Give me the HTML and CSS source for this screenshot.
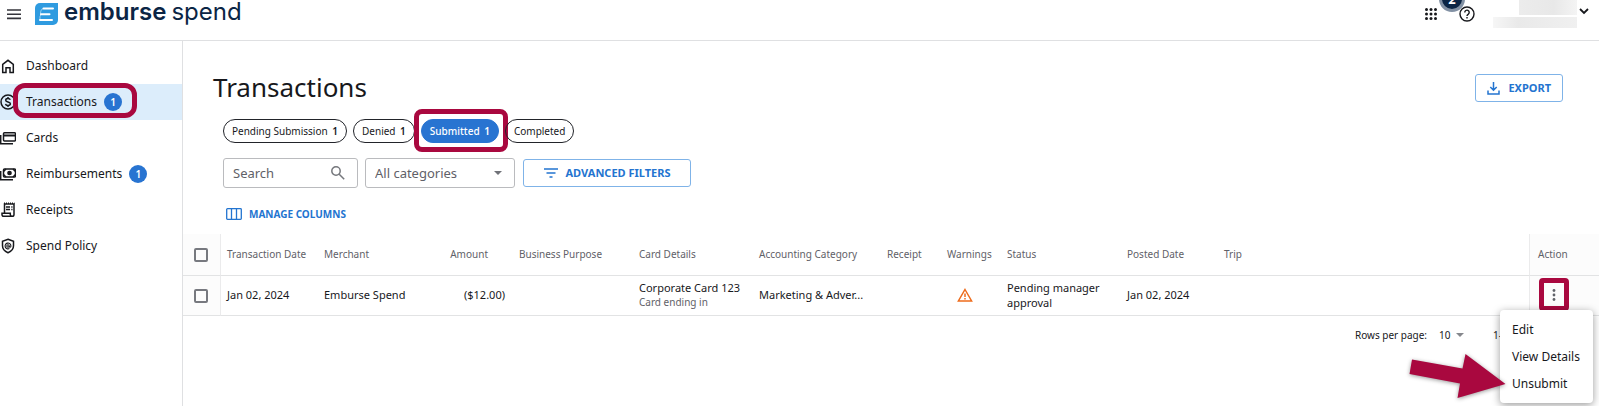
FILE: index.html
```html
<!DOCTYPE html>
<html lang="en">
<head>
<meta charset="utf-8">
<title>Transactions - Emburse Spend</title>
<link rel="stylesheet" href="styles.css">
</head>
<body>
<header class="topbar">
  <button class="icon-btn" aria-label="Menu"><svg width="14" height="12" viewBox="0 0 14 12" fill="none" stroke="#34343b" stroke-width="1.6"><path d="M0 2h14M0 6.2h14M0 10.4h14"/></svg></button>
  <a class="logo" href="#" aria-label="emburse spend">
    <svg width="23" height="22" viewBox="0 0 23 22"><path d="M5 0h18v17a5 5 0 0 1-5 5H0V5a5 5 0 0 1 5-5z" fill="#2f9be0"/><path d="M8.500 5.500H18M6 11.200h8.500M5 17h12" fill="none" stroke="#fff" stroke-width="2" stroke-linecap="round"/><path d="M8.500 5.500q-3 .5-3 5.500M6 11.200q-1.500 2-1 5.800" fill="none" stroke="#fff" stroke-width="1" opacity=".5"/></svg>
    <span class="logo-text"><b>emburse</b><span>spend</span></span>
  </a>
  <div class="topbar-right">
    <button class="icon-btn" aria-label="Apps"><svg width="12" height="12" viewBox="0 0 12 12" fill="#17181c"><circle cx="1.500" cy="1.500" r="1.500"/><circle cx="6" cy="1.500" r="1.500"/><circle cx="10.500" cy="1.500" r="1.500"/><circle cx="1.500" cy="6" r="1.500"/><circle cx="6" cy="6" r="1.500"/><circle cx="10.500" cy="6" r="1.500"/><circle cx="1.500" cy="10.500" r="1.500"/><circle cx="6" cy="10.500" r="1.500"/><circle cx="10.500" cy="10.500" r="1.500"/></svg></button>
    <button class="icon-btn help" aria-label="Help"><svg width="16" height="16" viewBox="0 0 16 16" fill="none" stroke="#17181c" stroke-width="1.400"><circle cx="8" cy="8" r="7"/><path d="M5.800 6.400a2.200 2.200 0 1 1 3.500 1.700C8.400 8.700 8 9 8 10"/><path d="M8 11v1.500"/></svg><span class="count">2</span></button>
    <button class="account" aria-label="Account"><span class="mask"><i class="mask-name"></i><i class="mask-org"></i></span><svg width="10" height="7" viewBox="0 0 10 7" fill="none" stroke="#17181c" stroke-width="1.800"><path d="M1 1l4 4 4-4"/></svg></button>
  </div>
</header>
<div class="shell">
  <nav class="sidebar">
    <a class="nav-item" href="#"><svg class="nav-icon" viewBox="0 0 16 16"><path d="M2.700 6.300v8.200h3.300V9.800h4v4.700h3.300V6.300L8 2.300z"/></svg><span>Dashboard</span></a>
    <a class="nav-item active" href="#"><svg class="nav-icon" viewBox="0 0 16 16"><circle cx="8" cy="8" r="7"/><path d="M10.300 5.800Q9.800 4.500 8 4.500C6.500 4.500 5.700 5.200 5.700 6.200c0 2.300 4.700 1.200 4.700 3.600 0 1-.9 1.700-2.400 1.700-1.500 0-2.300-.7-2.500-1.700M8 3v1.500M8 11.500V13"/></svg><span>Transactions</span><span class="badge">1</span><i class="mark mark-nav"></i></a>
    <a class="nav-item" href="#"><svg class="nav-icon" viewBox="0 0 16 16"><rect x="3.500" y="2.700" width="12" height="8.300" rx="1"/><path d="M3.500 5.500h12" stroke-width="2"/><path d="M.7 5v8.700h12.300"/></svg><span>Cards</span></a>
    <a class="nav-item" href="#"><svg class="nav-icon" viewBox="0 0 16 16"><rect x="3.500" y="3" width="12" height="8" rx="1"/><circle cx="9.500" cy="7" r="1.600" fill="#17181c"/><path d="M3.500 5.500L6 3M13 3l2.500 2.500M3.500 8.500L6 11M13 11l2.500-2.500M.7 5v8.700h12.300"/></svg><span>Reimbursements</span><span class="badge">1</span></a>
    <a class="nav-item" href="#"><svg class="nav-icon" viewBox="0 0 16 16"><path d="M4.500 11V2h9.500v10.500a1.800 1.800 0 0 1-1.800 1.800H3.500a1.500 1.500 0 0 1-1.500-1.500V11.200h8.300v1.500q.2 1.600 1.700 1.600"/><path d="M6 5h4M6 7.500h4M11.300 5h1.200M11.300 7.500h1.200"/><path d="M4 1.200h10.500" stroke-dasharray="1 1"/></svg><span>Receipts</span></a>
    <a class="nav-item" href="#"><svg class="nav-icon" viewBox="0 0 16 16"><path d="M8 1.300l5.500 2v4.500c0 3.200-2.300 5.600-5.500 6.900-3.200-1.300-5.500-3.700-5.500-6.900V3.300z"/><g stroke-width="1.100"><circle cx="8" cy="8" r="1.200"/><path d="M9.200 8q.1 1.400 1 1.200.9-.2.700-1.400A2.900 2.900 0 1 0 9.400 10.500"/></g></svg><span>Spend Policy</span></a>
  </nav>
  <main class="content">
    <div class="heading">
      <h1>Transactions</h1>
      <button class="outline-btn"><svg width="13" height="13" viewBox="0 0 13 13" fill="none" stroke="#2374d0" stroke-width="1.500"><path d="M6.500 0v8M3.300 5l3.200 3.200L9.700 5M1 8.500V12h11V8.500"/></svg>EXPORT</button>
    </div>
    <div class="chips">
      <button class="chip">Pending Submission <b>1</b></button>
      <button class="chip">Denied <b>1</b></button>
      <button class="chip selected">Submitted <b>1</b><i class="mark mark-chip"></i></button>
      <button class="chip">Completed</button>
    </div>
    <div class="filters">
      <label class="search"><input type="text" placeholder="Search" aria-label="Search"><svg width="14" height="14" viewBox="0 0 14 14" fill="none" stroke="#75777c" stroke-width="1.500"><circle cx="5" cy="5" r="4.200"/><path d="M8.200 8.200l5 5"/></svg></label>
      <div class="select-box"><select aria-label="Category"><option>All categories</option></select><svg width="8" height="4" viewBox="0 0 8 4" fill="#707278"><path d="M0 0h8L4 4z"/></svg></div>
      <button class="outline-btn wide"><svg width="14" height="10" viewBox="0 0 14 10" fill="none" stroke="#2374d0" stroke-width="1.500"><path d="M0 1h14M2.500 5h9M5.500 9h3"/></svg>ADVANCED FILTERS</button>
    </div>
    <button class="manage"><svg width="16" height="12" viewBox="0 0 16 12" fill="none" stroke="#2374d0" stroke-width="1.300"><rect x=".7" y=".7" width="14.600" height="10.600" rx=".8"/><path d="M5.500 1v10M10.500 1v10"/></svg>MANAGE COLUMNS</button>
    <table class="grid">
      <colgroup><col class="w-check"><col class="w-date"><col class="w-merchant"><col class="w-amount"><col class="w-wide"><col class="w-wide"><col class="w-category"><col class="w-small"><col class="w-small"><col class="w-wide"><col class="w-date"><col><col class="w-action"></colgroup>
      <thead><tr>
        <th class="pin-left"><input type="checkbox" aria-label="Select all"></th><th>Transaction Date</th><th>Merchant</th><th class="amount">Amount</th><th>Business Purpose</th><th>Card Details</th><th>Accounting Category</th><th>Receipt</th><th>Warnings</th><th>Status</th><th>Posted Date</th><th>Trip</th><th class="pin-right">Action</th>
      </tr></thead>
      <tbody><tr>
        <td class="pin-left"><input type="checkbox" aria-label="Select row"></td><td>Jan 02, 2024</td><td>Emburse Spend</td><td class="amount">($12.00)</td><td></td><td>Corporate Card 123<small>Card ending in</small></td><td>Marketing &amp; Adver...</td><td></td><td class="warn"><svg width="16" height="14" viewBox="0 0 16 14" fill="none" stroke="#ee6c1c" stroke-width="1.500"><path d="M8 1.500L14.600 13H1.400z"/><path d="M8 5.500v3.500M8 10v1.500"/></svg></td><td class="wrap">Pending manager approval</td><td>Jan 02, 2024</td><td></td>
        <td class="pin-right"><div class="row-menu"><button class="dots" aria-label="Row actions"><svg width="4" height="12" viewBox="0 0 4 12" fill="#606268"><circle cx="2" cy="1.500" r="1.400"/><circle cx="2" cy="6" r="1.400"/><circle cx="2" cy="10.500" r="1.400"/></svg></button>
          <div class="menu" role="menu"><button role="menuitem">Edit</button><button role="menuitem">View Details</button><button role="menuitem">Unsubmit</button>
            <svg class="arrow" width="100" height="50" viewBox="0 0 100 50"><path d="M5 7.500l50.500 9L58.500 2 98.500 32 50.500 46l2.500-14.500L2.500 22z" fill="#a9083f"/></svg>
          </div></div></td>
      </tr></tbody>
    </table>
    <div class="pager">
      <label for="rows">Rows per page:</label>
      <span class="rows-box"><select id="rows"><option>10</option></select><svg width="8" height="4" viewBox="0 0 8 4" fill="#85878c"><path d="M0 0h8L4 4z"/></svg></span>
      <span>1-</span>
    </div>
  </main>
</div>
</body>
</html>
```
FILE: styles.css
```css
* { box-sizing: border-box; }
html, body { height: 100%; }
body { margin: 0; display: flex; flex-direction: column; overflow: hidden; background: #fff; color: #17181c; font: 13px/18px "Noto Sans", sans-serif; }
button, input, select { font: inherit; color: inherit; }
button { border: 0; padding: 0; background: none; cursor: pointer; }
a { color: inherit; text-decoration: none; }
svg { display: block; flex: none; }

.topbar { display: flex; align-items: flex-start; flex: none; height: 41px; padding: 3px 10px 0 7px; border-bottom: 1px solid #dfe0e2; }
.icon-btn { position: relative; padding: 5px 0; }
.logo { display: flex; align-items: flex-start; gap: 6px; margin-left: 14px; color: #0b2545; }
.logo-text { display: flex; gap: 5px; font: 24px/18px Inter, sans-serif; }
.logo-text b { font-weight: 600; }
.topbar-right { display: flex; align-items: flex-start; margin-left: auto; }
.help { margin-left: 22px; padding-top: 3px; }
.count { position: absolute; left: -20px; bottom: 15px; width: 26px; height: 26px; border: 3px solid #8291a4; border-radius: 50%; background: #0b2545; color: #fff; font-weight: 700; line-height: 20px; text-align: center; }
.account { display: flex; align-items: flex-start; gap: 2px; margin-left: 18px; }
.account svg { margin-top: 5px; }
.mask { display: flex; flex-direction: column; align-items: flex-end; gap: 2px; margin-top: -3px; }
.mask-name { width: 58px; height: 15px; background: linear-gradient(90deg, #ececec, #e8e8e8 60%, #f4f4f4); }
.mask-org { width: 84px; height: 11px; background: linear-gradient(90deg, #f6f6f6, #e9e9e9 30%, #f0f0f0); }

.shell { display: flex; flex: 1; min-height: 0; }
.sidebar { flex: none; width: 183px; padding-top: 7px; border-right: 1px solid #dfe0e2; font-size: 12px; }
.nav-item { position: relative; display: flex; align-items: center; height: 36px; gap: 10px; }
.nav-item.active { background: #dcedfb; }
.nav-icon { width: 16px; height: 16px; fill: none; stroke: #17181c; stroke-width: 1.5; }
.badge { width: 18px; height: 18px; margin-left: -3px; border-radius: 50%; background: #2874d1; color: #fff; font-size: 10px; font-weight: 600; text-align: center; }
.mark { position: absolute; border: 5px solid #a9083f; pointer-events: none; }
.mark-nav { left: 13px; top: -1px; width: 124px; height: 35px; border-radius: 12px; }
.mark-chip { inset: -11px -10px -10px -8px; border-radius: 8px; }

.content { flex: 1; min-width: 0; }
.heading { display: flex; justify-content: space-between; align-items: center; padding: 29px 36px 0 30px; }
h1 { margin: 0; padding-bottom: 2px; font-size: 26px; font-weight: 400; line-height: 34px; }
.outline-btn { display: flex; align-items: center; justify-content: center; gap: 8px; height: 28px; padding: 0 11px; border: 1px solid #7fb3e8; border-radius: 3px; color: #2374d0; font-size: 11px; font-weight: 700; }
.outline-btn.wide { width: 168px; margin-left: 1px; }
.chips { display: flex; gap: 6px; padding: 13px 40px 0; }
.chip { position: relative; height: 24px; padding: 0 8px; border: 1px solid #22242a; border-radius: 12px; font-size: 10px; line-height: 22px; white-space: nowrap; }
.chip b { margin-left: 2px; font-weight: 600; }
.chip.selected { border-color: #2874d1; background: #2874d1; color: #fff; font-weight: 500; }
.filters { display: flex; align-items: center; gap: 7px; padding: 15px 40px 0; color: #5f6168; }
.search, .select-box { display: flex; align-items: center; height: 30px; padding: 0 12px 0 9px; border: 1px solid #babbbe; border-radius: 3px; }
.search { width: 135px; }
.select-box { width: 150px; }
.search input, .select-box select { flex: 1; min-width: 0; width: 100%; padding: 0; border: 0; outline: 0; appearance: none; background: none; }
.search input::placeholder { color: #5f6168; opacity: 1; }
.manage { display: flex; align-items: center; gap: 7px; margin: 17px 0 11px 43px; color: #2374d0; font-size: 10px; font-weight: 700; }

.grid { width: 100%; border-collapse: separate; border-spacing: 0; table-layout: fixed; font-size: 11px; line-height: 15px; }
.grid th, .grid td { padding: 0 6px; border-bottom: 1px solid #e2e3e4; text-align: left; white-space: nowrap; }
.grid th { height: 42px; color: #5f6168; font-size: 10px; font-weight: 400; }
.grid td { height: 40px; padding-bottom: 2px; }
.grid small { display: block; color: #5f6168; font-size: 10px; line-height: 14px; }
.grid .wrap { white-space: normal; }
.grid th.amount { padding-right: 25px; text-align: right; }
.grid td.amount { padding-right: 8px; text-align: right; }
.grid .warn { padding-left: 16px; }
.grid .pin-left { padding: 0 0 0 11px; border-right: 1px solid #ebebec; background: #fcfcfc; }
.grid .pin-right { padding-left: 9px; border-left: 1px solid #ebebec; background: #fcfcfc; }
.grid th.pin-right { padding-left: 8px; }
.grid input { display: block; width: 14px; height: 14px; margin: 0; border: 2px solid #77797f; border-radius: 2px; appearance: none; }
.w-check { width: 38px; }
.w-date { width: 97px; }
.w-merchant { width: 120px; }
.w-amount { width: 75px; }
.w-wide { width: 120px; }
.w-category { width: 128px; }
.w-small { width: 60px; }
.w-action { width: 70px; }

.row-menu { position: relative; width: 30px; }
.dots { display: flex; align-items: center; justify-content: center; width: 30px; height: 33px; border: 5px solid #a9083f; border-radius: 4px; }
.menu { position: absolute; z-index: 1; top: 32px; right: -24px; width: 93px; padding: 6px 0; border-radius: 4px; background: #fff; box-shadow: 0 2px 8px rgba(0, 0, 0, .4); }
.menu button { display: block; width: 100%; height: 27px; padding-left: 12px; font-size: 12px; text-align: left; }
.arrow { position: absolute; right: 86px; top: 42px; filter: drop-shadow(0 1px 2px rgba(0, 0, 0, .4)); }
.pager { display: flex; justify-content: flex-end; align-items: center; height: 38px; padding-right: 97px; font-size: 10px; }
.rows-box { display: flex; align-items: center; gap: 5px; margin: 0 29px 0 12px; }
.rows-box select { width: 12px; padding: 0; border: 0; appearance: none; background: none; }
```
